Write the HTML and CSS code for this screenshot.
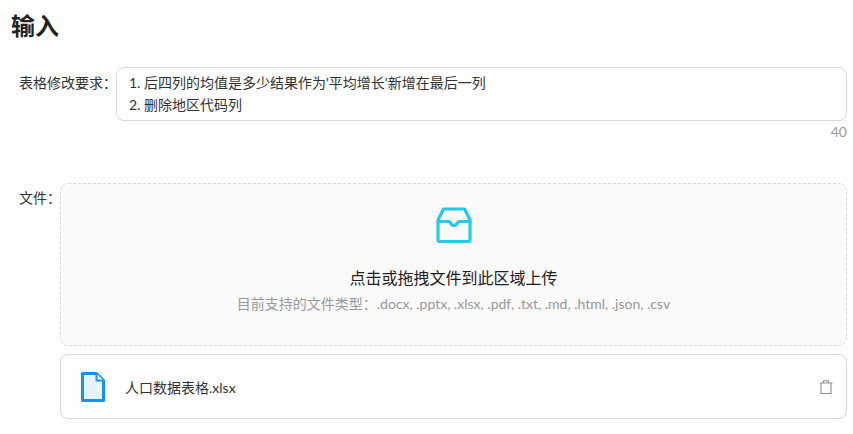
FILE: index.html
```html
<!DOCTYPE html>
<html lang="zh-CN">
<head>
  <meta charset="UTF-8" />
  <title>输入</title>
  <link rel="stylesheet" href="styles.css">
</head>
<body>

  <h1>输入</h1>

  <div class="form-row req-row">
    <label class="form-label">表格修改要求：</label>
    <div class="form-field">
      <div class="req-box">1. 后四列的均值是多少结果作为'平均增长'新增在最后一列<br>2. 删除地区代码列</div>
      <div class="char-count">40</div>
    </div>
  </div>

  <div class="form-row file-row">
    <label class="form-label">文件：</label>
    <div class="form-field">
      <div class="dropzone">
        <svg class="inbox-icon" viewBox="0 0 36 36" width="36" height="36" fill="none" stroke="#26c9ea" stroke-width="3.2" stroke-linejoin="round" stroke-linecap="round">
          <path d="M7.500 2h21l5.500 11v20a1.500 1.500 0 0 1-1.500 1.500h-29A1.500 1.500 0 0 1 2 33V13z" />
          <path d="M2 14.500h11c1.500 0 1.500 4 5 4s3.500-4 5-4h11" />
        </svg>
        <p class="drop-title">点击或拖拽文件到此区域上传</p>
        <p class="drop-hint">目前支持的文件类型：.docx, .pptx, .xlsx, .pdf, .txt, .md, .html, .json, .csv</p>
      </div>
      <div class="file-card">
        <svg class="file-icon" viewBox="0 0 24 30" width="24" height="30">
          <path d="M1.500 1.500h14l7 7v20h-21z" fill="#e6f4ff" stroke="#1890ff" stroke-width="3" stroke-linejoin="round" />
          <path d="M15.500 1.500v7h7" fill="#fff" stroke="#1890ff" stroke-width="2" stroke-linejoin="round" />
        </svg>
        <span class="file-name">人口数据表格.xlsx</span>
        <svg class="trash-icon" viewBox="0 0 14 14" width="14" height="14" fill="none" stroke="#8c8c8c" stroke-width="1.100">
          <path d="M.5 3h13M4.500 3V.8h5V3M2 3v10.500h10V3" />
        </svg>
      </div>
    </div>
  </div>

</body>
</html>
```

FILE: styles.css
```css
body {
  margin: 0;
  padding: 0 6px 0 11px;
  background: #fff;
  color: #333;
  font-family: Lato, "Noto Sans CJK SC", sans-serif;
  font-size: 14px;
}
h1 {
  margin: 0;
  padding-top: 9px;
  height: 67px;
  box-sizing: border-box;
  font-size: 24px;
  line-height: 34px;
  font-weight: 700;
  color: #222;
}
.form-row {
  display: flex;
}
.form-label {
  flex: none;
  padding-left: 8px;
  line-height: 32px;
  white-space: nowrap;
  color: #333;
}
.form-field {
  flex: 1;
  min-width: 0;
}
.req-row .form-label {
  width: 97px;
}
.file-row {
  margin-top: 42px;
}
.file-row .form-label {
  width: 41px;
  line-height: 30px;
}
.req-box {
  height: 54px;
  box-sizing: border-box;
  padding: 4px 12px;
  border: 1px solid #d9d9d9;
  border-radius: 8px;
  line-height: 22px;
}
.char-count {
  height: 20px;
  line-height: 22px;
  text-align: right;
  color: #999;
}
.dropzone {
  height: 163px;
  box-sizing: border-box;
  padding-top: 23px;
  border: 1px dashed #d9d9d9;
  border-radius: 8px;
  background: #fafafa;
  text-align: center;
}
.inbox-icon {
  display: block;
  margin: 0 auto;
}
.drop-title {
  margin: 23px 0 0;
  font-size: 16px;
  line-height: 24px;
  color: #222;
}
.drop-hint {
  margin: 3px 0 0;
  line-height: 22px;
  color: #999;
}
.file-card {
  display: flex;
  align-items: center;
  height: 65px;
  box-sizing: border-box;
  margin-top: 8px;
  padding: 0 13px 0 20px;
  border: 1px solid #d9d9d9;
  border-radius: 8px;
}
.file-name {
  flex: 1;
  margin-left: 20px;
}
```
